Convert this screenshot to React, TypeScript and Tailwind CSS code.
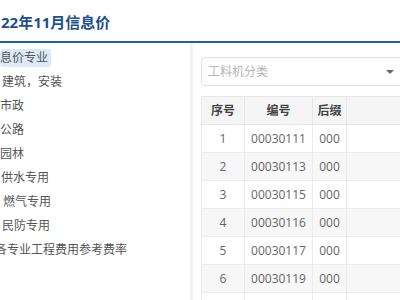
const items = [
  { label: "息价专业", indent: "ml-[0px]", active: true },
  { label: "建筑，安装", indent: "ml-[2px]" },
  { label: "市政", indent: "ml-[0px]" },
  { label: "公路", indent: "ml-[0px]" },
  { label: "园林", indent: "ml-[0px]" },
  { label: "供水专用", indent: "ml-[1px]" },
  { label: "燃气专用", indent: "ml-[3px]" },
  { label: "民防专用", indent: "ml-[2px]" },
  { label: "各专业工程费用参考费率", indent: "-ml-[5px]" },
];

const rows = [
  ["1", "00030111", "000"],
  ["2", "00030113", "000"],
  ["3", "00030115", "000"],
  ["4", "00030116", "000"],
  ["5", "00030117", "000"],
  ["6", "00030119", "000"],
  ["7", "00030121", "000"],
];

const cjk = "font-['Open_Sans','Noto_Sans_CJK_SC',sans-serif]";

export default function App() {
  return (
    <div className={`w-[400px] h-[300px] overflow-hidden bg-white ${cjk}`}>
      <div className="h-[41px] flex items-center">
        <h1 className="text-[15px] font-bold text-[#1d4f8c] ml-[1px] pt-[4px]">
          22年11月信息价
        </h1>
      </div>
      <div className="h-[2px] bg-[#1f5fa5]" />
      <div className="flex h-[257px]">
        <div className="w-[190px] shrink-0 pt-[3px] overflow-hidden">
          {items.map((it) => (
            <div key={it.label} className="h-[24px] flex items-center">
              <span
                className={`${it.indent} text-[12px] leading-[16px] whitespace-nowrap text-[#555] ${
                  it.active ? "bg-[#dbe9f8] rounded-[3px] pr-[3px] py-[1px]" : ""
                }`}
              >
                {it.label}
              </span>
            </div>
          ))}
        </div>
        <div className="w-[3px] shrink-0 bg-[#eef1f5]" />
        <div className="flex-1 pl-[8px] pt-[14px]">
          <div className="w-[210px] h-[29px] border border-[#e2e2e2] rounded-[4px] flex items-center justify-between pl-[6px] pr-[16px]">
            <span className="text-[12px] text-[#b5b5b5]">工料机分类</span>
            <span className="w-0 h-0 border-l-[4px] border-r-[4px] border-t-[4px] border-l-transparent border-r-transparent border-t-[#666]" />
          </div>
          <table className="mt-[10px] border-collapse text-[12px] w-[210px] table-fixed">
            <colgroup>
              <col className="w-[43px]" />
              <col className="w-[68px]" />
              <col className="w-[34px]" />
              <col />
            </colgroup>
            <thead>
              <tr className="h-[28px] bg-[#f5f5f5]">
                {["序号", "编号", "后缀", ""].map((h, i) => (
                  <th key={i} className="border border-[#e8e8e8] font-bold text-[#444] text-center">
                    {h}
                  </th>
                ))}
              </tr>
            </thead>
            <tbody>
              {rows.map((r, i) => (
                <tr key={r[0]} className={`h-[28px] ${i % 2 === 1 ? "bg-[#f7f7f7]" : "bg-white"}`}>
                  {r.map((c, j) => (
                    <td key={j} className="border border-[#ececec] text-center text-[#666]">
                      {c}
                    </td>
                  ))}
                  <td className="border border-[#ececec]" />
                </tr>
              ))}
            </tbody>
          </table>
        </div>
      </div>
    </div>
  );
}
